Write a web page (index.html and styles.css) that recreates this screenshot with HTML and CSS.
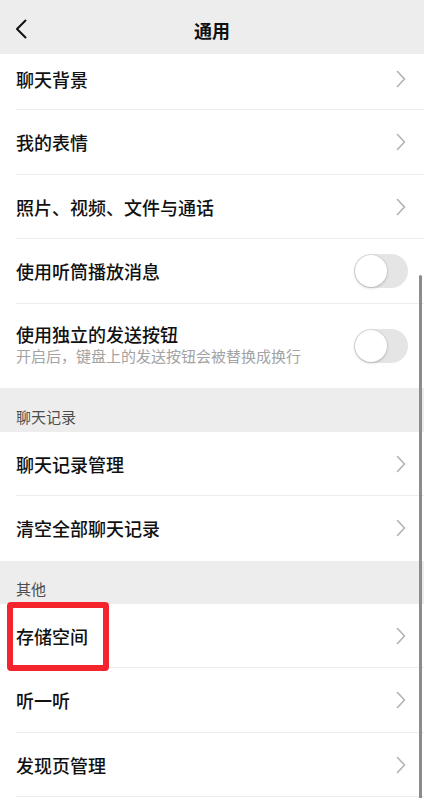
FILE: index.html
```html
<!DOCTYPE html>
<html lang="zh-CN">
<head>
<meta charset="utf-8">
<title>通用</title>
<link rel="stylesheet" href="styles.css">
</head>
<body>
<div class="screen">
  <header class="navbar">
    <span class="back">
      <svg width="12" height="20" viewBox="0 0 12 20"><path d="M10.5 1.5 L2 10 L10.5 18.5" fill="none" stroke="#111" stroke-width="2" stroke-linecap="round" stroke-linejoin="round"/></svg>
    </span>
    <h1 class="title">通用</h1>
  </header>

  <div class="group">
    <div class="row row-first"><span class="label">聊天背景</span><span class="chev"><svg width="10" height="18" viewBox="0 0 10 18"><path d="M1.5 1.5 L8.5 9 L1.5 16.5" fill="none" stroke="#b2b2b2" stroke-width="1.6" stroke-linecap="round" stroke-linejoin="round"/></svg></span></div>
    <div class="row"><span class="label">我的表情</span><span class="chev"><svg width="10" height="18" viewBox="0 0 10 18"><path d="M1.5 1.5 L8.5 9 L1.5 16.5" fill="none" stroke="#b2b2b2" stroke-width="1.6" stroke-linecap="round" stroke-linejoin="round"/></svg></span></div>
    <div class="row"><span class="label">照片、视频、文件与通话</span><span class="chev"><svg width="10" height="18" viewBox="0 0 10 18"><path d="M1.5 1.5 L8.5 9 L1.5 16.5" fill="none" stroke="#b2b2b2" stroke-width="1.6" stroke-linecap="round" stroke-linejoin="round"/></svg></span></div>
    <div class="row"><span class="label">使用听筒播放消息</span><span class="switch"><span class="knob"></span></span></div>
    <div class="row row-tall last">
      <div class="texts">
        <span class="label">使用独立的发送按钮</span>
        <span class="sub">开启后，键盘上的发送按钮会被替换成换行</span>
      </div>
      <span class="switch"><span class="knob"></span></span>
    </div>
  </div>

  <div class="section">聊天记录</div>
  <div class="group">
    <div class="row"><span class="label">聊天记录管理</span><span class="chev"><svg width="10" height="18" viewBox="0 0 10 18"><path d="M1.5 1.5 L8.5 9 L1.5 16.5" fill="none" stroke="#b2b2b2" stroke-width="1.6" stroke-linecap="round" stroke-linejoin="round"/></svg></span></div>
    <div class="row last"><span class="label">清空全部聊天记录</span><span class="chev"><svg width="10" height="18" viewBox="0 0 10 18"><path d="M1.5 1.5 L8.5 9 L1.5 16.5" fill="none" stroke="#b2b2b2" stroke-width="1.6" stroke-linecap="round" stroke-linejoin="round"/></svg></span></div>
  </div>

  <div class="section">其他</div>
  <div class="group">
    <div class="row"><span class="label">存储空间</span><span class="chev"><svg width="10" height="18" viewBox="0 0 10 18"><path d="M1.5 1.5 L8.5 9 L1.5 16.5" fill="none" stroke="#b2b2b2" stroke-width="1.6" stroke-linecap="round" stroke-linejoin="round"/></svg></span></div>
    <div class="row"><span class="label">听一听</span><span class="chev"><svg width="10" height="18" viewBox="0 0 10 18"><path d="M1.5 1.5 L8.5 9 L1.5 16.5" fill="none" stroke="#b2b2b2" stroke-width="1.6" stroke-linecap="round" stroke-linejoin="round"/></svg></span></div>
    <div class="row"><span class="label">发现页管理</span><span class="chev"><svg width="10" height="18" viewBox="0 0 10 18"><path d="M1.5 1.5 L8.5 9 L1.5 16.5" fill="none" stroke="#b2b2b2" stroke-width="1.6" stroke-linecap="round" stroke-linejoin="round"/></svg></span></div>
  </div>

  <div class="highlight"></div>
  <div class="scrollbar"></div>
</div>
</body>
</html>
```

FILE: styles.css
```css
* { box-sizing: border-box; }
html, body {
  margin: 0;
  padding: 0;
  background: #ffffff;
}
body {
  font-family: "Noto Sans CJK SC", "Noto Sans", sans-serif;
  color: #111111;
}
.screen {
  position: relative;
  width: 424px;
  height: 798px;
  overflow: hidden;
  background: #ffffff;
}
.navbar {
  height: 54px;
  background: #ededed;
  display: flex;
  align-items: center;
  justify-content: center;
  position: relative;
  padding-top: 5px;
}
.back {
  position: absolute;
  left: 15px;
  top: 19px;
  display: flex;
}
.title {
  margin: 0;
  font-size: 18px;
  font-weight: 700;
  line-height: 24px;
  color: #111;
}
.group {
  background: #fff;
}
.row {
  height: 64.5px;
  display: flex;
  align-items: center;
  justify-content: space-between;
  padding: 0 18px 0 16px;
  position: relative;
}
.row::after {
  content: "";
  position: absolute;
  left: 16px;
  right: 0;
  bottom: 0;
  height: 1px;
  background: #ececec;
}
.row.last::after { display: none; }
.row-first {
  height: 56px;
  padding-bottom: 6px;
}
.row-tall {
  height: 84px;
  padding-bottom: 4px;
}
.label {
  font-size: 18px;
  font-weight: 500;
  line-height: 24px;
  color: #111;
}
.texts {
  display: flex;
  flex-direction: column;
}
.sub {
  font-size: 15px;
  line-height: 20px;
  color: #a3a3a3;
  margin-top: 0;
}
.chev {
  display: flex;
  margin-right: 0;
}
.switch {
  width: 54px;
  height: 34px;
  border-radius: 17px;
  background: #e5e5e5;
  position: relative;
  margin-right: -2px;
  flex: none;
}
.knob {
  position: absolute;
  left: 1px;
  top: 1px;
  width: 32px;
  height: 32px;
  border-radius: 50%;
  background: #fff;
  box-shadow: 0 1px 3px rgba(0,0,0,0.22), 0 0 0 0.5px rgba(0,0,0,0.06);
}
.row-tall .switch { margin-top: 4px; }
.section {
  height: 44px;
  background: #ededed;
  font-size: 15px;
  line-height: 20px;
  color: #4d4d4d;
  padding: 0 16px 5px;
  display: flex;
  align-items: flex-end;
}
.section + .group + .section { height: 43px; }
.highlight {
  position: absolute;
  left: 7px;
  top: 602px;
  width: 102px;
  height: 69px;
  border: 6px solid #f3242b;
  border-radius: 4px;
}
.scrollbar {
  position: absolute;
  left: 419px;
  top: 275px;
  width: 3px;
  height: 540px;
  background: #8c8c8c;
  border-radius: 2px;
}
```
